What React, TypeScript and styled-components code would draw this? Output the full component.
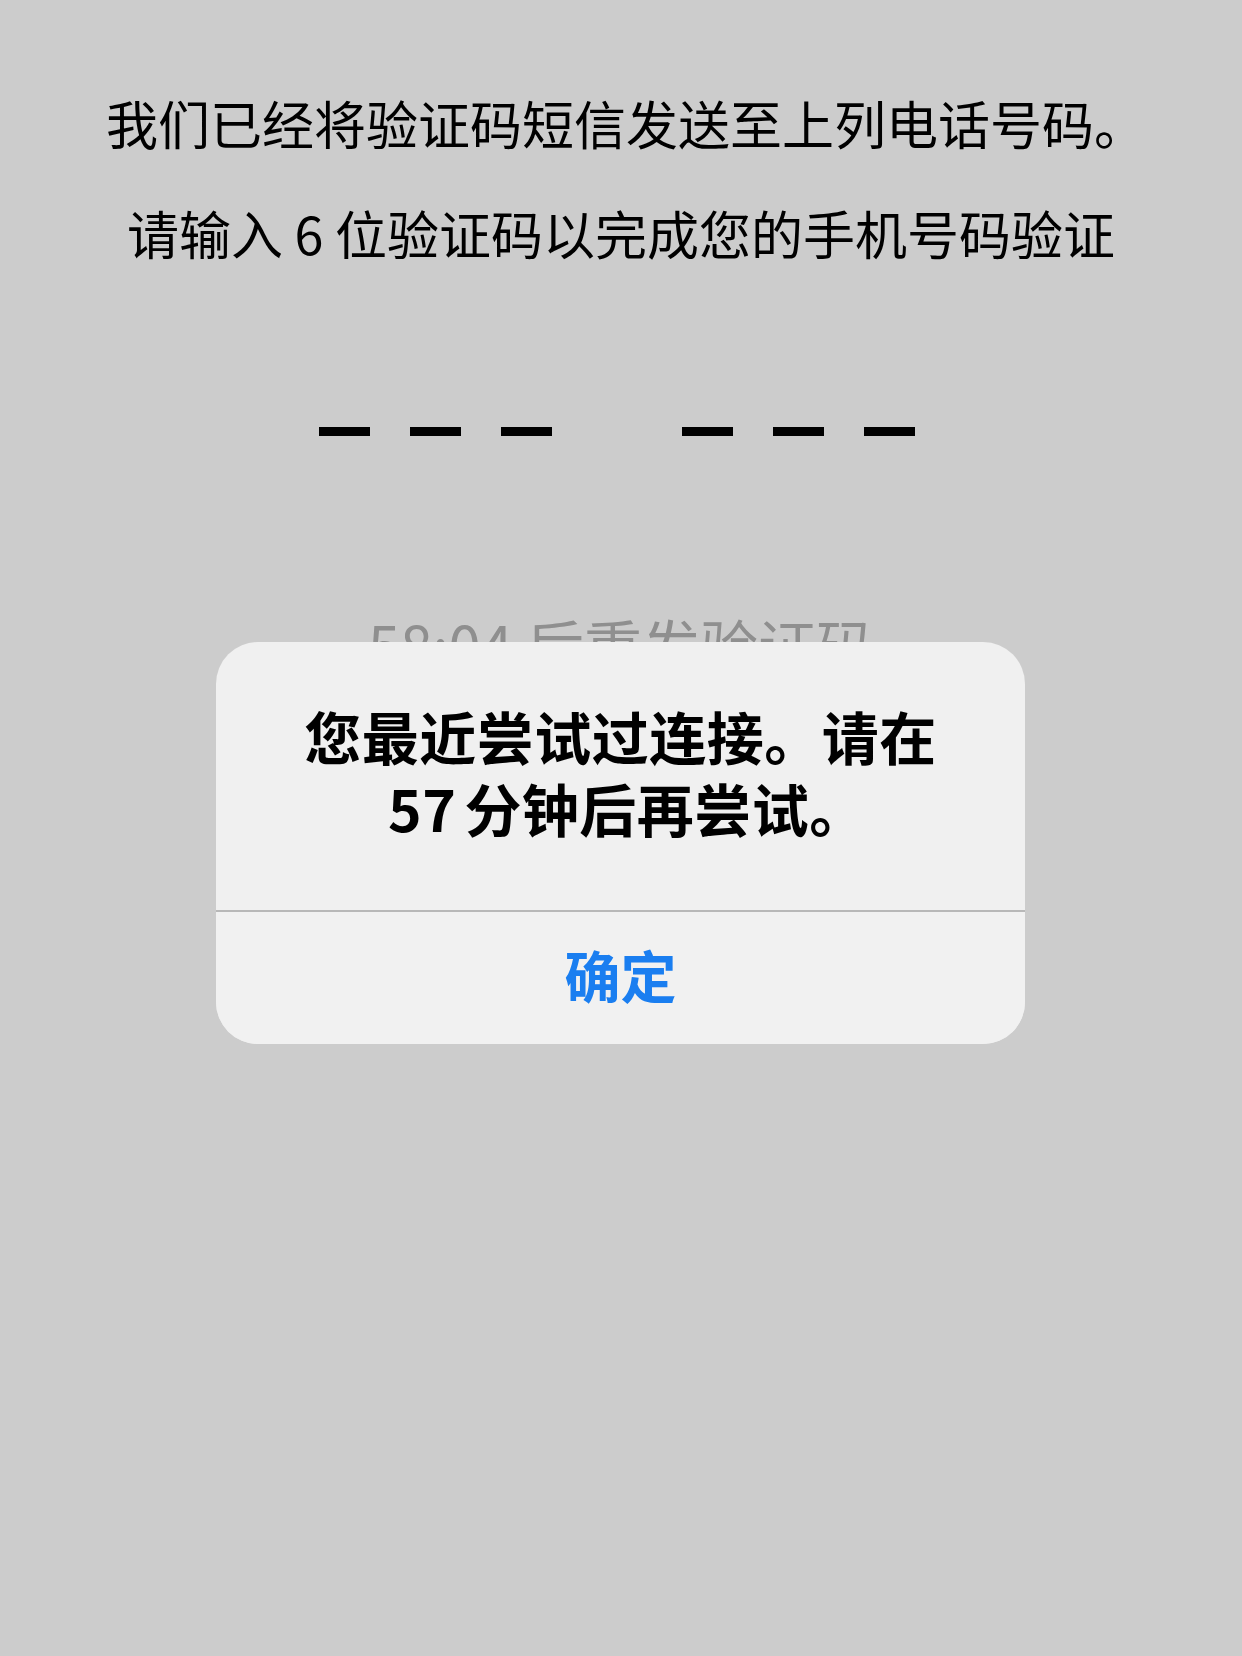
import React from 'react';
import styled, { createGlobalStyle } from 'styled-components';

const GlobalStyle = createGlobalStyle`
  html, body {
    margin: 0;
    padding: 0;
    background: #ffffff;
  }

  body {
    font-family: "Noto Sans CJK SC", "Noto Sans", sans-serif;
    -webkit-font-smoothing: antialiased;
  }
`;

const CODE_GROUPS = [3, 3];

const App: React.FC = () => (
  <>
    <GlobalStyle />
    <Screen>
      <Messages>
        <Message $offset={10}>我们已经将验证码短信发送至上列电话号码。</Message>
        <Message>请输入 6 位验证码以完成您的手机号码验证</Message>
      </Messages>
      <CodeRow>
        {CODE_GROUPS.map((count, groupIndex) => (
          <CodeGroup key={groupIndex}>
            {Array.from({ length: count }).map((_, i) => (
              <Dash key={i} />
            ))}
          </CodeGroup>
        ))}
      </CodeRow>
      <Resend>58:04 后重发验证码</Resend>
    </Screen>

    <Overlay>
      <Alert role="alertdialog">
        <AlertBody>
          <AlertTitle>
            您最近尝试过连接。请在
            <br />
            <Number>57</Number>分钟后再尝试。
          </AlertTitle>
        </AlertBody>
        <AlertDivider />
        <AlertButton type="button">确定</AlertButton>
      </Alert>
    </Overlay>
  </>
);

export default App;

const Screen = styled.main`
  min-height: 1656px;
  box-sizing: border-box;
  padding-top: 92px;
  display: flex;
  flex-direction: column;
  align-items: center;
  background: #ffffff;
  color: #000000;
`;

const Messages = styled.div`
  display: flex;
  flex-direction: column;
  align-items: center;
  gap: 48px;
`;

const Message = styled.p<{ $offset?: number }>`
  margin: 0;
  padding-left: ${({ $offset = 0 }) => $offset}px;
  font-size: 52px;
  line-height: 62px;
  font-weight: 400;
  white-space: nowrap;
`;

const CodeRow = styled.div`
  margin-top: 163px;
  margin-right: 8px;
  display: flex;
  gap: 130px;
`;

const CodeGroup = styled.div`
  display: flex;
  gap: 40px;
`;

const Dash = styled.span`
  display: block;
  width: 51px;
  height: 9px;
  background: #000000;
`;

const Resend = styled.p`
  margin: 174px 0 0;
  font-size: 58px;
  line-height: 68px;
  color: #b3b3b3;
  white-space: nowrap;
`;

const Overlay = styled.div`
  position: fixed;
  inset: 0;
  background: rgba(0, 0, 0, 0.2);
  display: flex;
  justify-content: center;
  align-items: flex-start;
  padding-top: 642px;
  box-sizing: border-box;
`;

const Alert = styled.section`
  width: 809px;
  border-radius: 42px;
  background: #f0f0f0;
  overflow: hidden;
  display: flex;
  flex-direction: column;
  margin-left: -1px;
`;

const AlertBody = styled.div`
  padding: 57px 60px 67px;
`;

const AlertTitle = styled.h2`
  margin: 0;
  text-align: center;
  font-size: 57px;
  line-height: 72px;
  font-weight: 700;
  color: #000000;
  letter-spacing: 0.5px;
`;

const Number = styled.span`
  margin-left: 14px;
  margin-right: 8px;
`;

const AlertDivider = styled.div`
  height: 2px;
  background: #b8b8b8;
`;

const AlertButton = styled.button`
  height: 132px;
  border: 0;
  padding: 0 0 10px;
  background: #f1f1f1;
  font-family: inherit;
  font-size: 56px;
  font-weight: 700;
  color: #1a7ef0;
  cursor: pointer;
`;
